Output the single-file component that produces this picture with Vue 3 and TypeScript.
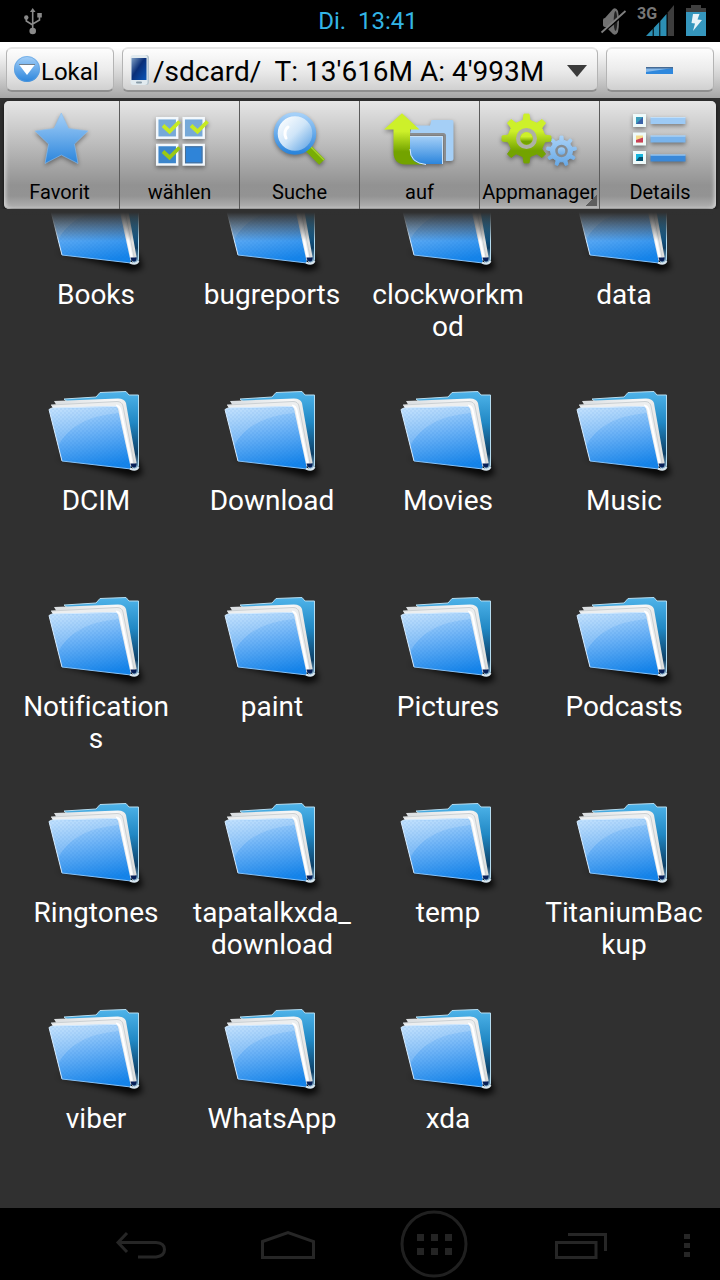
<script setup lang="ts">
import { ref } from 'vue'

const folders: string[] = [
  'Books', 'bugreports', 'clockworkmod', 'data',
  'DCIM', 'Download', 'Movies', 'Music',
  'Notifications', 'paint', 'Pictures', 'Podcasts',
  'Ringtones', 'tapatalkxda_download', 'temp', 'TitaniumBackup',
  'viber', 'WhatsApp', 'xda',
]

const location = ref('sdcard')
const storageLabel = "/sdcard/\u00a0 T: 13'616M A: 4'993M"

// Outline of a cog wheel with evenly spaced, tapered teeth.
function gear(cx: number, cy: number, outer: number, inner: number, teeth: number): string {
  const points: string[] = []
  const step = (Math.PI * 2) / teeth
  for (let i = 0; i < teeth; i++) {
    const mid = i * step - Math.PI / 2
    const corners: [number, number][] = [
      [-0.24, inner], [-0.13, outer], [0.13, outer], [0.24, inner],
    ]
    for (const [offset, radius] of corners) {
      const angle = mid + offset * step
      points.push(`${(cx + Math.cos(angle) * radius).toFixed(1)} ${(cy + Math.sin(angle) * radius).toFixed(1)}`)
    }
  }
  return `M${points.join('L')}Z`
}

const bigGear = gear(26.5, 29.5, 24.5, 18.5, 8)
const smallGear = gear(61.5, 42, 15, 11, 9)
</script>

<template>
  <div class="screen">
    <svg class="defs" width="0" height="0" aria-hidden="true">
      <defs>
        <linearGradient id="blue" x1="0" y1="0" x2="0" y2="1">
          <stop offset="0" stop-color="#a5d0f8" />
          <stop offset="1" stop-color="#2b85dc" />
        </linearGradient>
        <linearGradient id="paleBlue" x1="0" y1="0" x2="0" y2="1">
          <stop offset="0" stop-color="#a9d2f8" />
          <stop offset="1" stop-color="#68a9e6" />
        </linearGradient>
        <linearGradient id="green" x1="0" y1="0" x2="0" y2="1">
          <stop offset="0.35" stop-color="#cdf02a" />
          <stop offset="0.75" stop-color="#73a300" />
        </linearGradient>
        <linearGradient id="lens" x1="0" y1="0" x2="1" y2="1">
          <stop offset="0.1" stop-color="#ffffff" />
          <stop offset="0.5" stop-color="#cfe5f8" />
          <stop offset="1" stop-color="#4795e0" />
        </linearGradient>
        <linearGradient id="phone" x1="0" y1="0" x2="1" y2="1">
          <stop offset="0" stop-color="#7f9fc4" />
          <stop offset="0.45" stop-color="#0a2f78" />
          <stop offset="1" stop-color="#0a55b8" />
        </linearGradient>
        <linearGradient id="folderFront" x1="0.3" y1="0" x2="0.55" y2="1">
          <stop offset="0" stop-color="#b4dafd" />
          <stop offset="0.45" stop-color="#6bb2f6" />
          <stop offset="1" stop-color="#1584ea" />
        </linearGradient>
        <linearGradient id="folderBack" x1="0" y1="0" x2="0" y2="1">
          <stop offset="0" stop-color="#4fb4ea" />
          <stop offset="0.4" stop-color="#2188c4" />
          <stop offset="0.8" stop-color="#0d3f66" />
          <stop offset="1" stop-color="#8bb4cf" />
        </linearGradient>
        <linearGradient id="paper" x1="0" y1="0" x2="1" y2="0">
          <stop offset="0" stop-color="#d9dde0" />
          <stop offset="0.75" stop-color="#f8f8f8" />
          <stop offset="1" stop-color="#dcdcda" />
        </linearGradient>
        <filter id="soft" x="-20%" y="-100%" width="140%" height="300%">
          <feGaussianBlur stdDeviation="3" />
        </filter>
        <pattern id="weave" width="4" height="4" patternUnits="userSpaceOnUse">
          <path d="M0 0h2v2H0zM2 2h2v2H2z" fill="#0b62c4" fill-opacity="0.07" />
        </pattern>
        <g id="folder">
          <path d="M8 74L84 93L95 90L90 76Z" fill="#000" fill-opacity="0.85" filter="url(#soft)" />
          <path d="M16 15L48 13L52 8.500L78 7.500L81 11H90.500V81Q90.500 85 86 85.500L70 60Z" fill="url(#folderBack)" stroke="#b5dcf0" stroke-width="1" />
          <path d="M6 17L70 14.500Q76.500 14.500 78 19L88.500 79L82 83L60 30L10 24Z" fill="url(#paper)" />
          <path d="M3 21L69 17.500Q74 17.500 75 22L86 79L80 80L64 30L6 26Z" fill="#eceeef" />
          <path d="M3 21L69 17.500Q74 17.500 75 22L86 79" fill="none" stroke="#cbd0d3" stroke-width="1" />
          <path d="M68 21.500Q71.500 22 72.500 26L84 81" fill="none" stroke="#fff" stroke-width="2" />
          <path d="M1 25.500L4 24L67 22Q69 22 70 25L83 85L14 77Z" fill="url(#folderFront)" />
          <path d="M1 25.500L4 24L67 22Q69 22 70 25L83 85L14 77Z" fill="url(#weave)" />
          <path d="M1 25.500L69 23.500L70.500 29Q25 33 10 62Z" fill="#fff" fill-opacity="0.16" />
          <path d="M14 77L1 25.500L4 24L68 22.500" fill="none" stroke="#d5ebff" stroke-width="1" />
          <path d="M14 77L83 85" fill="none" stroke="#86c2f8" stroke-width="1" />
          <path d="M82 84.500Q88 87.500 90.500 83" fill="none" stroke="#d8e6ef" stroke-width="2" />
          <path d="M82.500 79.500H88.500V81Q88 84 85.500 83.500Q83 83 82.500 79.500Z" fill="#071f58" />
        </g>
      </defs>
    </svg>

    <header class="status">
      <svg class="usb" width="20" height="42" viewBox="0 0 20 42" role="img" aria-label="USB">
        <g fill="none" stroke="#8a8a8a" stroke-width="1.600">
          <path d="M8.700 11V30M2.300 18V21L8.700 25M15.500 16V20L8.700 24" />
        </g>
        <path d="M8.700 8L11.500 12H6Z" fill="#8a8a8a" />
        <circle cx="8.700" cy="31" r="3.300" fill="#8a8a8a" />
        <circle cx="2.300" cy="17.500" r="2.200" fill="#8a8a8a" />
        <rect x="13.300" y="13" width="4.500" height="4.500" fill="#8a8a8a" />
      </svg>
      <time class="clock">Di.&nbsp; 13:41</time>
      <div class="indicators">
        <svg width="32" height="42" viewBox="0 0 32 42" role="img" aria-label="Stumm">
          <path d="M3 20Q3 18 5 18L13 9Q16 7 18 11Q20 21 18 32Q16 36 13 34L6 27Q3 27 3 25Z" fill="#717171" />
          <ellipse cx="15.500" cy="21" rx="1.800" ry="10" fill="#222" />
          <path d="M1 34L26 13" stroke="#000" stroke-width="2" />
          <path d="M1.500 32.500L25.500 11" stroke="#808080" stroke-width="1.800" />
        </svg>
        <svg width="40" height="42" viewBox="0 0 40 42" role="img" aria-label="3G">
          <path d="M10 36L16.700 29V36ZM17.700 28L23.300 22V36H17.700ZM24.300 21L30.500 14V36H24.300Z" fill="#2c8fb4" />
          <path d="M31.700 12.500L38 5V36H31.700Z" fill="#3d3d3d" />
          <text x="1" y="19" class="network">3G</text>
        </svg>
        <svg width="32" height="42" viewBox="0 0 32 42" role="img" aria-label="Akku lädt">
          <path d="M11 5H21V8H26V12H6V8H11Z" fill="#3f3f3f" />
          <rect x="6" y="12" width="20" height="24" fill="#3596bd" />
          <path d="M13 14H19.500L17.500 19.500L22 20L13 31L15 23.500L11.500 23Z" fill="#e8f3f8" />
        </svg>
      </div>
    </header>

    <div class="address">
      <button type="button" class="box local">
        <svg width="28" height="28" viewBox="0 0 28 28" aria-hidden="true">
          <circle cx="14" cy="13" r="13" fill="url(#blue)" />
          <circle cx="14" cy="13" r="12.500" fill="none" stroke="#5d9fdc" stroke-opacity="0.6" />
          <path d="M6 8.500H22L14 19Z" fill="#fff" />
          <path d="M6 8.500H22" stroke="#727e8a" stroke-width="1" />
        </svg>
        <span>Lokal</span>
      </button>
      <div class="box path">
        <svg width="22" height="32" viewBox="0 0 22 32" aria-hidden="true">
          <rect x="3" y="1" width="17" height="30" rx="3" fill="#b6c5ce" />
          <rect x="1.500" y="1" width="17" height="30" rx="3" fill="#e1eaef" />
          <rect x="2.500" y="4" width="15" height="22" fill="url(#phone)" />
          <rect x="7" y="27.500" width="6" height="2" rx="1" fill="#899ca8" />
        </svg>
        <select v-model="location" aria-label="Pfad">
          <option value="sdcard">{{ storageLabel }}</option>
        </select>
        <svg class="arrow" width="20" height="14" viewBox="0 0 20 14" aria-hidden="true">
          <path d="M0 2H20L10 14Z" fill="#3b3b3b" />
        </svg>
      </div>
      <button type="button" class="box" aria-label="Minimieren">
        <svg width="28" height="8" viewBox="0 0 28 8" aria-hidden="true">
          <rect x="0" y="1" width="27" height="7" fill="#2f88dd" />
          <path d="M0 2H27L0 6Z" fill="#86b9ea" />
          <rect x="0" y="1" width="27" height="1.500" fill="#456a94" />
        </svg>
      </button>
    </div>

    <nav class="toolbar" aria-label="Werkzeuge">
      <button type="button">
        <svg width="80" height="64" viewBox="0 0 80 64" aria-hidden="true">
          <path d="M41.300 4L48.500 19.500L68 22L54.500 35L58 54.500L41.300 46L25 54.500L28.500 35L15 22L34 19.500Z" fill="url(#blue)" stroke="#8cc0f0" stroke-width="0.600" />
        </svg>
        <span>Favorit</span>
      </button>
      <button type="button">
        <svg width="80" height="64" viewBox="0 0 80 64" aria-hidden="true">
          <g stroke="#f3f8fc" stroke-width="2.500">
            <rect x="17.200" y="9.200" width="20" height="19.500" fill="#76a9d8" />
            <rect x="43.700" y="9.200" width="20" height="19.500" fill="#76a9d8" />
            <rect x="17.200" y="36" width="20" height="19.500" fill="#3c86cc" />
            <rect x="43.700" y="36" width="20" height="19.500" fill="#2f84d8" />
          </g>
          <rect x="45.500" y="37.800" width="16.500" height="16" fill="none" stroke="#4a6f96" />
          <g fill="none" stroke-width="3.800">
            <path d="M23 16.500L29.500 22.500L39.500 12.500M51 16.500L57.500 22.500L67.500 12.500" stroke="#c6ea22" />
            <path d="M23 42.500L29.500 48.500L39.500 38.500" stroke="#9bc913" />
          </g>
        </svg>
        <span>wählen</span>
      </button>
      <button type="button">
        <svg width="80" height="64" viewBox="0 0 80 64" aria-hidden="true">
          <path d="M47 38L62 53" stroke="#79ad05" stroke-width="8" />
          <path d="M51 38L64 51" stroke="#a3d12a" stroke-width="1.500" />
          <circle cx="35" cy="24.500" r="19.300" fill="url(#lens)" stroke="url(#blue)" stroke-width="4" />
          <path d="M28 18Q23 22 26 29" fill="none" stroke="#fff" stroke-width="3" stroke-linecap="round" />
        </svg>
        <span>Suche</span>
      </button>
      <button type="button">
        <svg width="80" height="64" viewBox="0 0 80 64" aria-hidden="true">
          <path d="M32 16.500H50L51.500 11H72Q73.500 11 73.500 13V50Q73.500 52 71 52H65.500V27Q65.500 24.500 63 24.500H30Z" fill="#a5cff6" />
          <path d="M28 25H63Q65 25 65 27V52" fill="none" stroke="#8a8d90" stroke-width="2" />
          <path d="M28 27H63V55H28Z" fill="url(#blue)" />
          <path d="M28 27.500H62.500V55" fill="none" stroke="#c7e2fa" stroke-width="1" />
          <path d="M22 4.300L39.500 20.500H30V42Q30 54 44 55.500H25Q13.500 55 13.500 43V20.500H4Z" fill="url(#green)" />
          <path d="M30 40Q30 54 46 55.500" fill="none" stroke="#d7eaf8" stroke-width="1" />
        </svg>
        <span>auf</span>
      </button>
      <button type="button" class="more">
        <svg width="80" height="64" viewBox="0 0 80 64" aria-hidden="true">
          <path :d="smallGear" fill="url(#paleBlue)" stroke="url(#paleBlue)" stroke-linejoin="round" />
          <circle cx="61.500" cy="42" r="5" fill="url(#paleBlue)" stroke="#858c92" stroke-width="2.500" />
          <path :d="bigGear" fill="url(#green)" stroke="url(#green)" stroke-linejoin="round" />
          <circle cx="26.500" cy="29.500" r="8.500" fill="none" stroke="#aeb1a6" stroke-width="4" />
          <circle cx="26.500" cy="29.500" r="6" fill="url(#green)" />
        </svg>
        <span>Appmanager</span>
      </button>
      <button type="button">
        <svg width="80" height="64" viewBox="0 0 80 64" aria-hidden="true">
          <g fill="#eefafa">
            <rect x="13" y="5" width="13" height="13" />
            <rect x="13" y="23.500" width="13" height="13" />
            <rect x="13" y="42" width="13" height="13" />
          </g>
          <rect x="16" y="8" width="7" height="7" fill="#3b9dbb" />
          <path d="M23 8V15H16Z" fill="#3a62a8" />
          <rect x="16" y="26.500" width="7" height="7" fill="#f5dc8c" />
          <path d="M16 31L23 28.500V33.500H16Z" fill="#c83f58" />
          <rect x="16" y="45" width="7" height="7" fill="#17b4dc" />
          <path d="M19 48H23V52H16Z" fill="#04506f" />
          <rect x="30.500" y="8" width="35" height="7" fill="#9dcaf5" />
          <rect x="30.500" y="26.500" width="35" height="7" fill="#78b3ec" />
          <rect x="30.500" y="45.500" width="35" height="7" fill="#3a88d8" />
          <path d="M30.500 8.500H65.500M30.500 27H65.500M30.500 46H65.500" stroke="#c2dff8" stroke-width="1" />
        </svg>
        <span>Details</span>
      </button>
    </nav>

    <main class="files">
      <ul class="grid">
        <li v-for="name in folders" :key="name">
          <button type="button" class="item">
            <svg width="96" height="96" viewBox="0 0 96 96" aria-hidden="true">
              <use href="#folder" />
            </svg>
            <span>{{ name }}</span>
          </button>
        </li>
      </ul>
    </main>

    <footer class="system">
      <span></span>
      <button type="button" aria-label="Zurück">
        <svg width="50" height="28" viewBox="0 0 50 28" aria-hidden="true">
          <path d="M3 12.500H40Q48.500 13 48.500 19.500T40 27H22" fill="none" stroke="#262626" stroke-width="3" />
          <path d="M11 3L2 12.500L11 22" fill="none" stroke="#262626" stroke-width="3" />
        </svg>
      </button>
      <button type="button" aria-label="Startseite">
        <svg width="54" height="30" viewBox="0 0 54 30" aria-hidden="true">
          <path d="M1.500 12.500L27 3.500L52.500 12.500V28.500H1.500Z" fill="none" stroke="#262626" stroke-width="3" />
        </svg>
      </button>
      <button type="button" aria-label="Apps">
        <svg width="70" height="70" viewBox="0 0 70 70" aria-hidden="true">
          <circle cx="35" cy="35" r="32" fill="none" stroke="#202020" stroke-width="3" />
          <path d="M18 25h7v7h-7zM32 25h7v7h-7zM46 25h7v7h-7zM18 39h7v7h-7zM32 39h7v7h-7zM46 39h7v7h-7z" fill="#242424" />
        </svg>
      </button>
      <button type="button" aria-label="Letzte Apps">
        <svg width="52" height="28" viewBox="0 0 52 28" aria-hidden="true">
          <path d="M1.500 12.500H41V27.500H1.500ZM13 4.500H50.500V21" fill="none" stroke="#262626" stroke-width="3" />
        </svg>
      </button>
      <button type="button" aria-label="Menü">
        <svg width="6" height="26" viewBox="0 0 6 26" aria-hidden="true">
          <path d="M0 3h6v5H0zM0 12h6v5H0zM0 21h6v5H0z" fill="#262626" />
        </svg>
      </button>
    </footer>
  </div>
</template>

<style>
body {
  margin: 0;
  background: #000;
}
</style>

<style scoped>
.screen {
  display: flex;
  flex-direction: column;
  height: 100vh;
  background: #303030;
  color: #000;
  font-family: Roboto, "Noto Sans", sans-serif;
}

button,
select {
  margin: 0;
  padding: 0;
  border: 0;
  background: none;
  color: inherit;
  font: inherit;
}

svg {
  display: block;
  flex: none;
  overflow: visible;
}

.defs {
  position: absolute;
}

.status {
  display: grid;
  grid-template-columns: 1fr auto 1fr;
  align-items: center;
  height: 42px;
  padding: 0 8px 0 24px;
  background: #000;
}

.clock {
  color: #33b5e5;
  font-size: 24px;
  line-height: 42px;
}

.indicators {
  display: flex;
  justify-content: flex-end;
  gap: 4px;
}

.network {
  fill: #777;
  font-size: 16px;
  font-weight: 700;
}

.address {
  display: grid;
  grid-template-columns: 108px 1fr 108px;
  gap: 8px;
  box-sizing: border-box;
  height: 56px;
  padding: 5px 6px 6px;
  background: linear-gradient(#fff 10%, #d2d2d2 60%, #a6a6a6);
}

.box {
  display: flex;
  align-items: center;
  justify-content: center;
  box-sizing: border-box;
  min-width: 0;
  border: 1px solid #b4b4b4;
  border-top: 2px solid #e6e6e6;
  border-bottom: 2px solid #8f8f8f;
  border-radius: 6px;
  background: linear-gradient(#fdfdfd, #ececec 50%, #d0d0d0);
}

.local {
  justify-content: flex-start;
  padding-left: 6px;
  font-size: 24px;
}

.local span {
  padding-top: 4px;
}

.path {
  justify-content: flex-start;
  padding: 0 10px 0 6px;
}

.path select {
  flex: 1;
  min-width: 0;
  margin-left: 2px;
  padding-top: 4px;
  appearance: none;
  font-size: 28px;
  line-height: 36px;
}

.toolbar {
  position: relative;
  z-index: 1;
  display: grid;
  grid-template-columns: repeat(6, 1fr);
  height: 108px;
  margin-top: 3px;
}

.toolbar::before {
  content: "";
  position: absolute;
  inset: 0 4px;
  border-radius: 5px;
  background: linear-gradient(#e6e6e6, #bcbcbc 40%, #929292 78%, #939393 88%, #b4b4b4);
  box-shadow: inset 3px 0 5px -2px #e4e4e4, inset -3px 0 5px -2px #e4e4e4, inset 0 -1px 0 #7c7c7c, 0 2px 4px #111;
}

.toolbar button {
  position: relative;
  display: flex;
  flex-direction: column;
  align-items: center;
  gap: 7px;
  min-width: 0;
  padding-top: 8px;
  font-size: 20px;
  line-height: 24px;
}

.toolbar button:not(:last-child) {
  border-right: 1px solid #5c5c5c;
}

.toolbar svg {
  filter: drop-shadow(0 2px 2px rgba(0, 0, 0, 0.4));
}

.more::after {
  content: "";
  position: absolute;
  right: 2px;
  bottom: 3px;
  width: 11px;
  height: 11px;
  background: linear-gradient(135deg, transparent 50%, #5e5e5e 50%);
}

.files {
  position: relative;
  display: flex;
  flex: 1;
  flex-direction: column;
  justify-content: flex-end;
  min-height: 0;
  overflow: hidden;
}

.files::before {
  content: "";
  position: absolute;
  top: 0;
  right: 0;
  left: 0;
  z-index: 1;
  height: 32px;
  background: linear-gradient(#303030 10%, rgba(48, 48, 48, 0));
}

.grid {
  display: grid;
  grid-template-columns: repeat(4, 1fr);
  grid-auto-rows: minmax(206px, auto);
  column-gap: 16px;
  margin: 0;
  padding: 0 16px;
  list-style: none;
}

.item {
  display: flex;
  flex-direction: column;
  align-items: center;
  gap: 5px;
  width: 100%;
  color: #fff;
  font-size: 28px;
  font-variant-ligatures: none;
  line-height: 32px;
}

.item span {
  max-width: 159px;
  word-break: break-all;
}

.system {
  display: grid;
  grid-template-columns: 68px repeat(4, 1fr) 66px;
  height: 72px;
  background: #000;
}

.system button {
  display: flex;
  align-items: center;
  justify-content: center;
}
</style>
